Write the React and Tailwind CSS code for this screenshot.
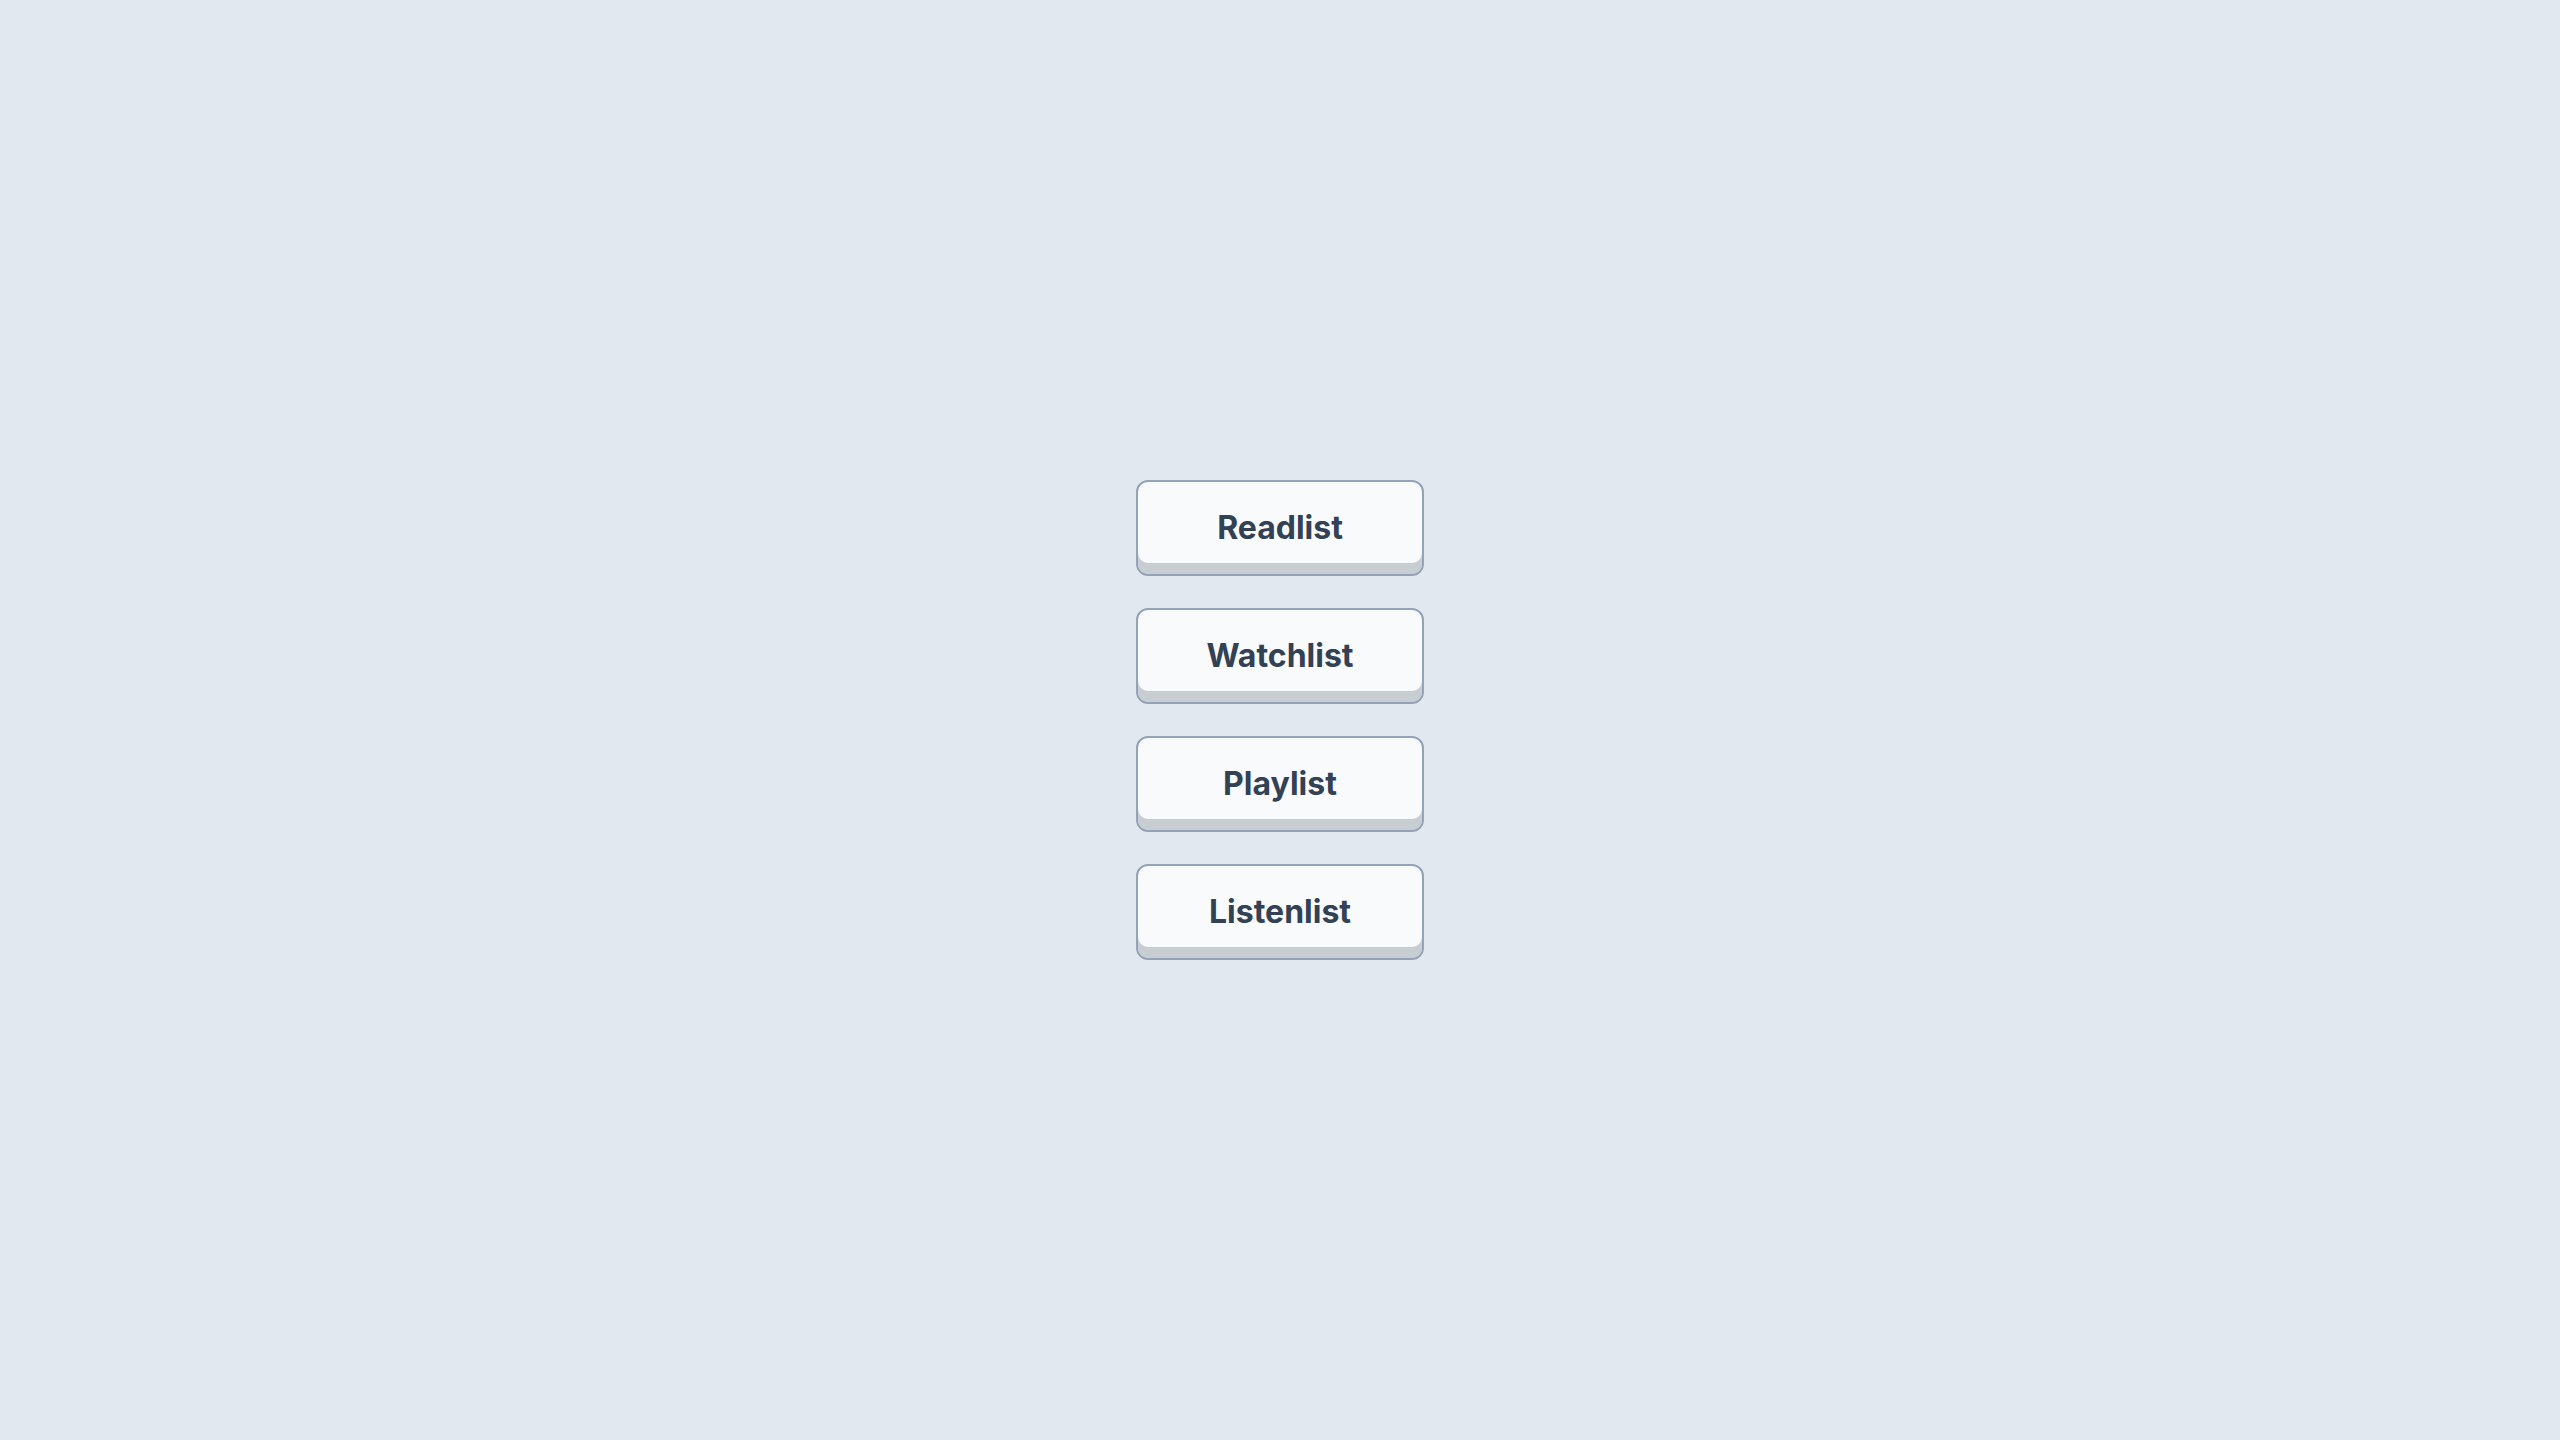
const items = ["Readlist", "Watchlist", "Playlist", "Listenlist"];

function ListButton({ label }) {
  return (
    <button className="w-[288px] h-[96px] rounded-xl border-2 border-[#94a3b8] bg-[#f8fafc] shadow-[inset_0_-11px_0_#c8cdd2] text-[32px] font-bold text-[#334155] font-['Inter',sans-serif]">
      {label}
    </button>
  );
}

export default function App() {
  return (
    <div className="min-h-screen w-full bg-[#e2e8f0] flex flex-col items-center justify-center gap-8">
      {items.map((item) => (
        <ListButton key={item} label={item} />
      ))}
    </div>
  );
}
